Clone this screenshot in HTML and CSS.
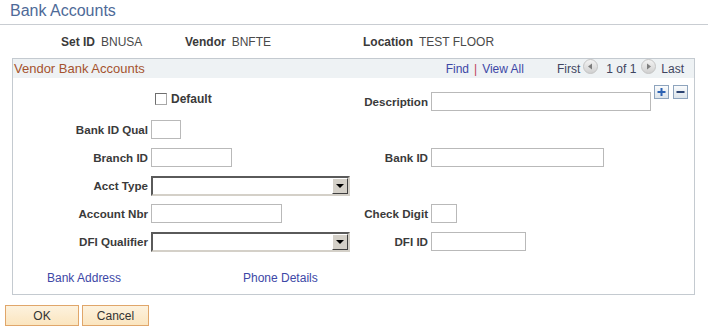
FILE: index.html
```html
<!DOCTYPE html>
<html lang="en">
<head>
  <meta charset="UTF-8">
  <title>Bank Accounts</title>
  <link rel="stylesheet" href="styles.css">
</head>
<body>
  <div class="page-title">Bank Accounts</div>

  <div class="key-row">
    <div class="key-pair pair-setid"><span class="lbl">Set ID</span><span class="val">BNUSA</span></div>
    <div class="key-pair pair-vendor"><span class="lbl">Vendor</span><span class="val">BNFTE</span></div>
    <div class="key-pair"><span class="lbl">Location</span><span class="val">TEST FLOOR</span></div>
  </div>

  <div class="scroll-box">
    <div class="box-head">
      <span class="box-title">Vendor Bank Accounts</span>
      <div class="nav">
        <a class="link">Find</a><span class="sep">|</span><a class="link">View All</a>
        <span class="nav-first">First</span>
        <svg class="nav-ico" width="15" height="15" viewBox="0 0 15 15">
          <defs><linearGradient id="g1" x1="0" y1="0" x2="0" y2="1"><stop offset="0" stop-color="#f4f4f4"/><stop offset="1" stop-color="#cfcfcf"/></linearGradient></defs>
          <circle cx="7.5" cy="7.5" r="7" fill="url(#g1)" stroke="#c4c4c4"/>
          <path d="M5 7.5 L9 4.5 L9 10.5 Z" fill="#7d7d7d"/>
        </svg>
        <span class="nav-count">1 of 1</span>
        <svg class="nav-ico" width="15" height="15" viewBox="0 0 15 15">
          <circle cx="7.5" cy="7.5" r="7" fill="url(#g1)" stroke="#c4c4c4"/>
          <path d="M10 7.5 L6 4.5 L6 10.5 Z" fill="#7d7d7d"/>
        </svg>
        <span class="nav-last">Last</span>
      </div>
    </div>

    <div class="form-grid">
      <div></div>
      <div class="check-cell"><span class="checkbox"></span><span class="lbl">Default</span></div>
      <div class="lbl right">Description</div>
      <div class="input w-desc"></div>
      <div class="row-btns">
        <svg width="15" height="14" viewBox="0 0 15 14">
          <defs><linearGradient id="g2" x1="0" y1="0" x2="0" y2="1"><stop offset="0" stop-color="#fbfcfd"/><stop offset="1" stop-color="#dbe3ea"/></linearGradient></defs>
          <rect x="0.5" y="0.5" width="14" height="13" fill="url(#g2)" stroke="#8ea4bd"/>
          <path d="M7.5 3 V11 M3.5 7 H11.5" stroke="#2d63b4" stroke-width="2"/>
        </svg>
        <svg width="15" height="14" viewBox="0 0 15 14">
          <rect x="0.5" y="0.5" width="14" height="13" fill="url(#g2)" stroke="#8ea4bd"/>
          <path d="M3.5 7 H11.5" stroke="#2c4472" stroke-width="2"/>
        </svg>
      </div>

      <div class="lbl right">Bank ID Qual</div>
      <div class="input w-qual"></div>
      <div></div><div></div><div></div>

      <div class="lbl right">Branch ID</div>
      <div class="input w-branch"></div>
      <div class="lbl right">Bank ID</div>
      <div class="input w-bankid"></div>
      <div></div>

      <div class="lbl right">Acct Type</div>
      <div class="select"><span class="select-btn"></span></div>
      <div></div><div></div><div></div>

      <div class="lbl right">Account Nbr</div>
      <div class="input w-acct"></div>
      <div class="lbl right">Check Digit</div>
      <div class="input w-check"></div>
      <div></div>

      <div class="lbl right">DFI Qualifier</div>
      <div class="select"><span class="select-btn"></span></div>
      <div class="lbl right">DFI ID</div>
      <div class="input w-dfi"></div>
      <div></div>
    </div>

    <div class="links">
      <a class="link">Bank Address</a>
      <a class="link">Phone Details</a>
    </div>
  </div>

  <div class="actions">
    <button class="btn btn-ok">OK</button>
    <button class="btn btn-cancel">Cancel</button>
  </div>
</body>
</html>
```

FILE: styles.css
```css
body {
  margin: 0;
  font-family: 'Liberation Sans', Arial, sans-serif;
  font-size: 12px;
  color: #333;
  background: #fff;
}

.page-title {
  font-size: 16px;
  line-height: 18px;
  color: #4e6a98;
  padding: 2px 0 4px 10px;
  border-bottom: 1px solid #c9cdd2;
}

.key-row {
  display: flex;
  padding: 10px 0 0 61px;
  line-height: 14px;
}

.key-pair {
  display: flex;
  gap: 6px;
}

.pair-setid { width: 124px; }
.pair-vendor { width: 178px; }

.lbl {
  font-weight: bold;
  color: #3a3a3a;
}

.val {
  color: #4a4a4a;
}

.right {
  text-align: right;
  align-self: center;
  font-size: 11.6px;
}

.scroll-box {
  margin: 9px 0 0 12px;
  width: 681px;
  border: 1px solid #c4cad0;
  padding-bottom: 9px;
}

.box-head {
  display: flex;
  align-items: center;
  justify-content: space-between;
  height: 19px;
  background: #eef2f4;
  padding: 0 10px 0 1px;
}

.box-title {
  font-size: 13px;
  color: #a5532e;
}

.nav {
  display: flex;
  align-items: center;
}

.link {
  color: #3d47a6;
  cursor: pointer;
}

.sep {
  color: #c0405a;
  margin: 0 5px;
}

.nav-first {
  color: #3f4560;
  margin: 0 3px 0 33px;
}

.nav-count {
  margin: 0 5px 0 8px;
  color: #3f4560;
}

.nav-last {
  margin-left: 5px;
  color: #3f4560;
}

.nav-ico {
  display: block;
  margin-top: -4px;
}

.form-grid {
  display: grid;
  grid-template-columns: 135px 200px 74px 220px auto;
  grid-auto-rows: 19px;
  column-gap: 3px;
  row-gap: 9px;
  padding-top: 14px;
}

.check-cell {
  display: flex;
  align-items: center;
  gap: 4px;
  padding-left: 4px;
  height: 12px;
  line-height: 12px;
  margin-top: 1px;
}

.checkbox {
  width: 10px;
  height: 10px;
  border: 1px solid #a8a8a8;
  border-top-color: #6e6e6e;
  border-left-color: #6e6e6e;
  background: #fff;
}

.input {
  height: 17px;
  border: 1px solid #b9b9b9;
  background: #fff;
  box-sizing: content-box;
}

.w-desc { width: 218px; }
.w-qual { width: 28px; }
.w-branch { width: 79px; }
.w-bankid { width: 171px; }
.w-acct { width: 129px; }
.w-check { width: 24px; }
.w-dfi { width: 93px; }

.select {
  width: 195px;
  height: 16px;
  border: 2px solid #5a5a5a;
  border-right-color: #d4d0c8;
  border-bottom-color: #d4d0c8;
  background: #fff;
  display: flex;
  justify-content: flex-end;
}

.select-btn {
  width: 14px;
  height: 14px;
  background: #d4d0c8;
  border: 1px solid #fff;
  border-right-color: #404040;
  border-bottom-color: #404040;
  position: relative;
}

.select-btn::after {
  content: '';
  position: absolute;
  left: 3px;
  top: 5px;
  border-left: 4px solid transparent;
  border-right: 4px solid transparent;
  border-top: 4px solid #000;
}

.row-btns {
  display: flex;
  gap: 4px;
  margin-top: -7px;
}

.links {
  display: flex;
  padding-left: 34px;
  margin-top: 20px;
  line-height: 14px;
}

.links .link:first-child {
  width: 196px;
}

.actions {
  display: flex;
  gap: 3px;
  margin: 10px 0 0 5px;
}

.btn {
  height: 21px;
  font-family: 'Liberation Sans', Arial, sans-serif;
  font-size: 12px;
  color: #333;
  background: linear-gradient(#fdf2de, #fbe5bf);
  border: 1px solid #e0a66a;
  padding: 0;
}

.btn-ok { width: 74px; }
.btn-cancel { width: 67px; }
```
